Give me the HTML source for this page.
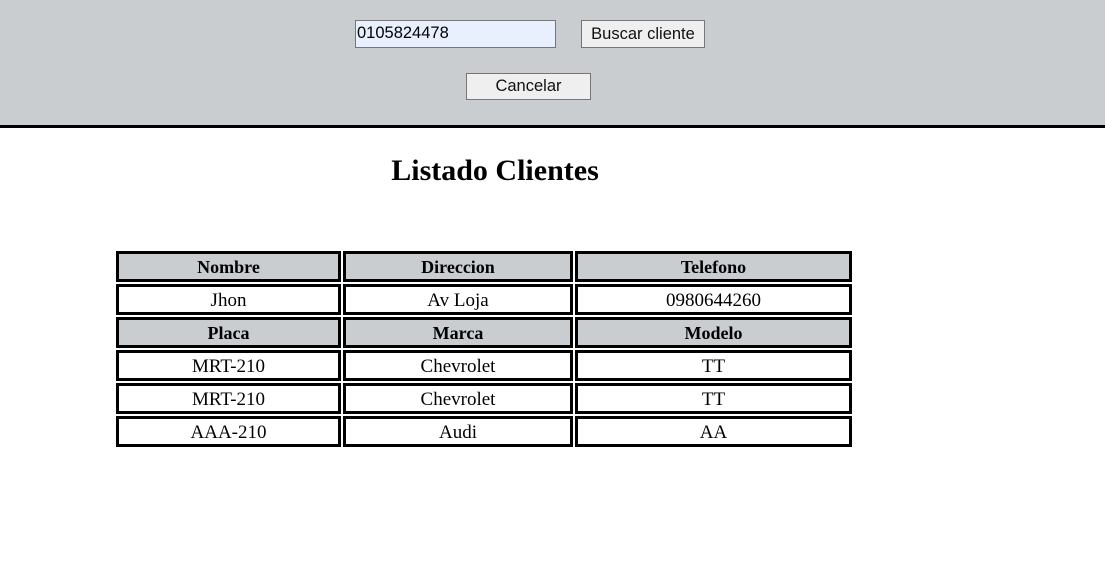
<!DOCTYPE html>
<html><head><style>
body{margin:0;width:1105px;height:578px;background:#fff;position:relative;font-family:"Liberation Serif",serif;overflow:hidden}
.top{position:absolute;left:0;top:0;width:1105px;height:125px;background:#c9cdd0;border-bottom:3px solid #000}
.inp{position:absolute;left:355px;top:20px;width:201px;border:1px solid #767676;background:#e8f0fe;font:16.5px "Liberation Sans",sans-serif;line-height:25px;padding-left:1px;box-sizing:border-box;height:28px}
.btn{position:absolute;border:1px solid #767676;background:#efefef;font:16.5px "Liberation Sans",sans-serif;text-align:center;box-sizing:border-box;color:#111}
h1{position:absolute;left:0;width:990px;top:154px;margin:0;text-align:center;font-size:30px;font-weight:bold}
.c{position:absolute;border:3px solid #000;box-sizing:border-box;text-align:center;font-size:19px;line-height:27px;height:31px}
.h{background:#c9cdd0;font-weight:bold;font-size:18px}
</style></head><body>
<div class="top"></div>
<div class="inp">0105824478</div>
<div class="btn" style="left:581px;top:20px;width:124px;height:28px;line-height:26px">Buscar cliente</div>
<div class="btn" style="left:466px;top:73px;width:125px;height:27px;line-height:24px">Cancelar</div>
<h1>Listado Clientes</h1>
<div class="c h" style="left:116px;top:251px;width:225px">Nombre</div>
<div class="c h" style="left:343px;top:251px;width:230px">Direccion</div>
<div class="c h" style="left:575px;top:251px;width:277px">Telefono</div>
<div class="c" style="left:116px;top:284px;width:225px">Jhon</div>
<div class="c" style="left:343px;top:284px;width:230px">Av Loja</div>
<div class="c" style="left:575px;top:284px;width:277px">0980644260</div>
<div class="c h" style="left:116px;top:317px;width:225px">Placa</div>
<div class="c h" style="left:343px;top:317px;width:230px">Marca</div>
<div class="c h" style="left:575px;top:317px;width:277px">Modelo</div>
<div class="c" style="left:116px;top:350px;width:225px">MRT-210</div>
<div class="c" style="left:343px;top:350px;width:230px">Chevrolet</div>
<div class="c" style="left:575px;top:350px;width:277px">TT</div>
<div class="c" style="left:116px;top:383px;width:225px">MRT-210</div>
<div class="c" style="left:343px;top:383px;width:230px">Chevrolet</div>
<div class="c" style="left:575px;top:383px;width:277px">TT</div>
<div class="c" style="left:116px;top:416px;width:225px">AAA-210</div>
<div class="c" style="left:343px;top:416px;width:230px">Audi</div>
<div class="c" style="left:575px;top:416px;width:277px">AA</div>
</body></html>
